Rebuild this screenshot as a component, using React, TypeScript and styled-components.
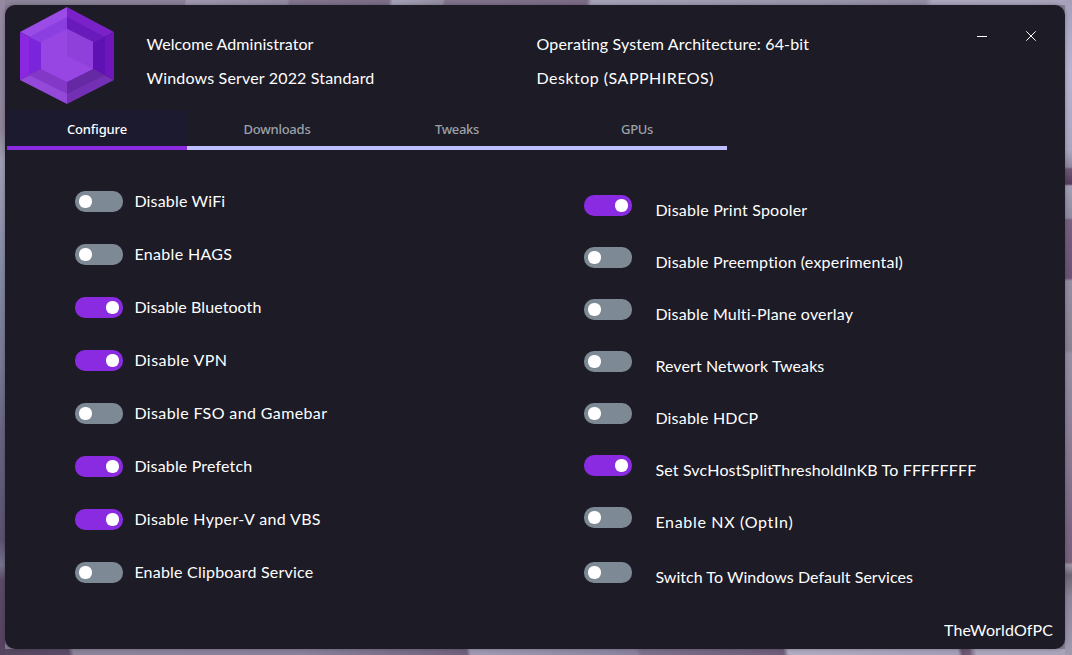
import React, { useLayoutEffect, useRef, useState } from "react";
import styled, { createGlobalStyle } from "styled-components";

const GlobalStyle = createGlobalStyle`
  * { box-sizing: border-box; }
  body { margin: 0; overflow: hidden; }
`;

const Desktop = styled.div`
  width: 1072px;
  height: 655px;
  padding: 5px 7px 6px 5px;
  background:
    linear-gradient(180deg, #a5a0ba 0, #b9b4d2 70px, #aba7be 150px, #8f879d 167px, #6d5873 169px, #543c5c 184px, #a39fb2 186px, #8f8a9e 218px, #76617e 220px, #6b5274 278px, #958ea2 281px, #8a8194 350px, #978fa3 354px, #8a7e94 440px, #796680 530px, #74617a 562px, #9d96a8 565px, #6f6478 575px, #8d869a 597px, #a09aae 655px) right 0 top 0 / 7px 655px no-repeat,
    linear-gradient(180deg, #958aa0 0, #8e8398 130px, #a0a0b3 160px, #858ba3 270px, #777a91 360px, #686580 430px, #5b5270 540px, #78728a 565px, #5b4b66 580px, #55435f 655px) left 0 top 0 / 5px 655px no-repeat,
    linear-gradient(100deg, #8c8498 0, #8b8298 182px, #a19aae 184px, #928aa0 283px, #82768c 286px, #7b6e86 383px, #a7a3b6 387px, #958fa2 436px, #81748c 439px, #7d6c86 578px, #a8a4b8 583px, #938ea4 912px, #aca7bb 918px, #a9a4bb 1072px) left 0 top 0 / 1072px 5px no-repeat,
    linear-gradient(80deg, #55465f 0, #5a4c66 68px, #8c859a 73px, #89809a 300px, #6f617c 460px, #a19bb2 464px, #8a829c 627px, #7c708a 632px, #6d5d78 772px, #b0abc0 777px, #a49fb6 944px, #68546f 948px, #6e5b76 955px, #aca6ba 962px, #a9a3b8 1072px) left 0 bottom 0 / 1072px 6px no-repeat,
    #857c92;
`;

const AppWindow = styled.main`
  display: flex;
  flex-direction: column;
  width: 1060px;
  height: 644px;
  border-radius: 10px;
  overflow: hidden;
  background: #1d1b26;
  box-shadow: 0 0 4px rgba(30, 25, 45, 0.35);
  color: #fff;
  font-family: Lato, "Liberation Sans", sans-serif;
  font-size: 16px;
`;

const Header = styled.header`
  display: flex;
  height: 105px;
  padding-left: 15px;
`;

const Logo = styled.svg`
  width: 94px;
  height: 98px;
  margin-top: 2px;
  flex: none;
`;

const InfoColumn = styled.div<{ $gap: number; $width: number }>`
  display: flex;
  flex-direction: column;
  gap: 14px;
  width: ${(p) => p.$width}px;
  margin-left: ${(p) => p.$gap}px;
  padding-top: 29px;
`;

const WindowControls = styled.div`
  display: flex;
  gap: 38px;
  padding-top: 26px;
  height: 40px;
`;

const ControlButton = styled.button`
  display: flex;
  width: 11px;
  height: 11px;
  padding: 0;
  border: 0;
  background: none;
  color: #fff;
`;

const TabBar = styled.nav`
  display: flex;
  width: 720px;
  height: 40px;
  margin-left: 2px;
  flex: none;
`;

const Tab = styled.button<{ $active?: boolean }>`
  display: flex;
  align-items: center;
  justify-content: center;
  width: 180px;
  padding: 2px 0 0;
  border: 0;
  border-bottom: 4px solid ${(p) => (p.$active ? "#8a2be2" : "#bfbfff")};
  background: ${(p) => (p.$active ? "#1c1a2f" : "transparent")};
  color: ${(p) => (p.$active ? "#fff" : "#9ca1a9")};
  font: 500 13px "Noto Sans", "Open Sans", sans-serif;
`;

const Panel = styled.section`
  display: flex;
  flex: 1;
  padding-left: 70px;
`;

const Column = styled.div<{ $top: number; $width: number }>`
  display: flex;
  flex-direction: column;
  width: ${(p) => p.$width}px;
  padding-top: ${(p) => p.$top}px;
`;

const Row = styled.label<{ $height: number; $gap: number }>`
  display: flex;
  align-items: flex-start;
  gap: ${(p) => p.$gap}px;
  height: ${(p) => p.$height}px;
`;

const Track = styled.span<{ $on?: boolean }>`
  display: flex;
  align-items: center;
  justify-content: ${(p) => (p.$on ? "flex-end" : "flex-start")};
  flex: none;
  width: 48px;
  height: 21px;
  padding: 0 4px;
  border-radius: 10px;
  background: ${(p) => (p.$on ? "#8a2be2" : "#7d8994")};
`;

const Knob = styled.span`
  width: 13px;
  height: 13px;
  border-radius: 6px;
  background: #fff;
`;

const LabelBox = styled.span<{ $drop: number }>`
  display: flex;
  padding-top: ${(p) => p.$drop}px;
`;

const Line = styled.span`
  display: block;
  line-height: 20px;
  white-space: pre;
`;

const Footer = styled.footer`
  display: flex;
  justify-content: flex-end;
  height: 29px;
  padding-right: 12px;
`;

// Tracks a line of text out or in so that it spans the given width.
function Text({ width, children }: { width: number; children: string }) {
  const ref = useRef<HTMLSpanElement>(null);
  const [spacing, setSpacing] = useState(0);
  useLayoutEffect(() => {
    const range = document.createRange();
    range.selectNodeContents(ref.current!);
    const natural = range.getBoundingClientRect().width;
    setSpacing((width - natural) / children.length);
  }, []);
  return (
    <Line ref={ref} style={{ letterSpacing: spacing }}>
      {children}
    </Line>
  );
}

interface Option {
  label: string;
  width: number;
  on?: boolean;
}

const leftOptions: Option[] = [
  { label: "Disable WiFi", width: 91 },
  { label: "Enable HAGS", width: 98 },
  { label: "Disable Bluetooth", width: 127, on: true },
  { label: "Disable VPN", width: 93, on: true },
  { label: "Disable FSO and Gamebar", width: 193 },
  { label: "Disable Prefetch", width: 118, on: true },
  { label: "Disable Hyper-V and VBS", width: 186.5, on: true },
  { label: "Enable Clipboard Service", width: 179 },
];

const rightOptions: Option[] = [
  { label: "Disable Print Spooler", width: 152, on: true },
  { label: "Disable Preemption (experimental)", width: 248 },
  { label: "Disable Multi-Plane overlay", width: 198 },
  { label: "Revert Network Tweaks", width: 169 },
  { label: "Disable HDCP", width: 103 },
  { label: "Set SvcHostSplitThresholdInKB To FFFFFFFF", width: 321, on: true },
  { label: "Enable NX (OptIn)", width: 138 },
  { label: "Switch To Windows Default Services", width: 257.5 },
];

function Toggle({ on }: { on?: boolean }) {
  return (
    <Track $on={on}>
      <Knob />
    </Track>
  );
}

function Gem() {
  return (
    <Logo viewBox="0 0 94 98">
      <path d="M47 0 0 25 47 49Z" fill="#9b4be6" />
      <path d="M47 0 94 25 47 49Z" fill="#7a22c8" />
      <path d="M0 25V73L47 49Z" fill="#8928e0" />
      <path d="M94 25V73L47 49Z" fill="#6c16bc" />
      <path d="M0 73 47 97V49Z" fill="#9449da" />
      <path d="M94 73 47 97V49Z" fill="#7430b4" />
      <path d="M47 10 9 30 47 49Z" fill="#8b3fe0" />
      <path d="M47 10 85 30 47 49Z" fill="#681abb" />
      <path d="M9 30V68L47 49Z" fill="#7a24dc" />
      <path d="M85 30V68L47 49Z" fill="#5e12b4" />
      <path d="M9 68 47 87V49Z" fill="#8338c8" />
      <path d="M85 68 47 87V49Z" fill="#6629a4" />
      <path d="M47 22 73 35V62L47 75 21 62V35Z" fill="#9846e3" />
      <path d="M47 22 73 35V62L47 49Z" fill="#9040da" />
    </Logo>
  );
}

export default function App() {
  return (
    <Desktop>
      <GlobalStyle />
      <AppWindow>
        <Header>
          <Gem />
          <InfoColumn $gap={32.5} $width={390}>
            <Text width={167}>Welcome Administrator</Text>
            <Text width={228}>Windows Server 2022 Standard</Text>
          </InfoColumn>
          <InfoColumn $gap={0} $width={440.5}>
            <Text width={273}>Operating System Architecture: 64-bit</Text>
            <Text width={177.5}>Desktop (SAPPHIREOS)</Text>
          </InfoColumn>
          <WindowControls>
            <ControlButton aria-label="Minimize">
              <svg width="11" height="11" viewBox="0 0 11 11">
                <path d="M0 5.5H10" stroke="currentColor" />
              </svg>
            </ControlButton>
            <ControlButton aria-label="Close">
              <svg width="11" height="11" viewBox="0 0 11 11">
                <path d="M.3.3 9.7 9.7M9.7.3.3 9.7" stroke="currentColor" />
              </svg>
            </ControlButton>
          </WindowControls>
        </Header>
        <TabBar>
          <Tab $active>
            <Text width={60}>Configure</Text>
          </Tab>
          <Tab>
            <Text width={67}>Downloads</Text>
          </Tab>
          <Tab>
            <Text width={44}>Tweaks</Text>
          </Tab>
          <Tab>
            <Text width={32}>GPUs</Text>
          </Tab>
        </TabBar>
        <Panel>
          <Column $top={41} $width={509}>
            {leftOptions.map((o) => (
              <Row key={o.label} $height={53} $gap={11.4}>
                <Toggle on={o.on} />
                <LabelBox $drop={0}>
                  <Text width={o.width}>{o.label}</Text>
                </LabelBox>
              </Row>
            ))}
          </Column>
          <Column $top={45} $width={440}>
            {rightOptions.map((o, i) => (
              <Row key={o.label} $height={i === 6 ? 55 : 52} $gap={23.4}>
                <Toggle on={o.on} />
                <LabelBox $drop={5}>
                  <Text width={o.width}>{o.label}</Text>
                </LabelBox>
              </Row>
            ))}
          </Column>
        </Panel>
        <Footer>
          <Text width={109}>TheWorldOfPC</Text>
        </Footer>
      </AppWindow>
    </Desktop>
  );
}
